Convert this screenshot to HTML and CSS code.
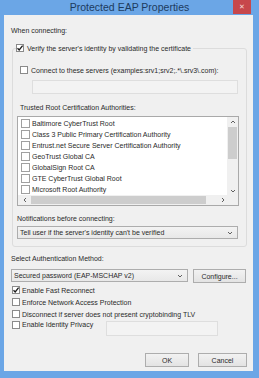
FILE: index.html
```html
<!DOCTYPE html>
<html lang="en">
<head>
  <meta charset="UTF-8">
  <title>Protected EAP Properties</title>
  <link rel="stylesheet" href="styles.css">
</head>
<body>
  <div class="window">
    <div class="titlebar">
      <span class="title">Protected EAP Properties</span>
      <span class="close">&#x2715;</span>
    </div>

    <div class="content">
      <div class="label top-label">When connecting:</div>

      <div class="group">
        <div class="check-row group-title">
          <span class="box checked"><svg viewBox="0 0 8 8"><path d="M1.5 4.2 L3.2 6 L6.6 1.6" /></svg></span>
          <span>Verify the server's identity by validating the certificate</span>
        </div>

        <div class="check-row connect-row">
          <span class="box"></span>
          <span>Connect to these servers (examples:srv1;srv2;.*\.srv3\.com):</span>
        </div>
        <div class="field server-field"></div>

        <div class="label trusted-label">Trusted Root Certification Authorities:</div>
        <div class="list">
          <div class="list-body">
            <div class="list-items">
              <div class="list-item"><span class="box"></span>Baltimore CyberTrust Root</div>
              <div class="list-item"><span class="box"></span>Class 3 Public Primary Certification Authority</div>
              <div class="list-item"><span class="box"></span>Entrust.net Secure Server Certification Authority</div>
              <div class="list-item"><span class="box"></span>GeoTrust Global CA</div>
              <div class="list-item"><span class="box"></span>GlobalSign Root CA</div>
              <div class="list-item"><span class="box"></span>GTE CyberTrust Global Root</div>
              <div class="list-item"><span class="box"></span>Microsoft Root Authority</div>
            </div>
            <div class="vscroll">
              <svg class="arrow" viewBox="0 0 6 4"><path d="M1 3 L3 1 L5 3" /></svg>
              <div class="vthumb"></div>
              <div class="vspace"></div>
              <svg class="arrow" viewBox="0 0 6 4"><path d="M1 1 L3 3 L5 1" /></svg>
            </div>
          </div>
          <div class="hscroll">
            <svg class="harrow" viewBox="0 0 4 6"><path d="M3 1 L1 3 L3 5" /></svg>
            <div class="hthumb"></div>
            <div class="hspace"></div>
            <svg class="harrow" viewBox="0 0 4 6"><path d="M1 1 L3 3 L1 5" /></svg>
            <div class="corner"></div>
          </div>
        </div>

        <div class="label notify-label">Notifications before connecting:</div>
        <div class="select notify-select">
          <span>Tell user if the server's identity can't be verified</span>
          <svg class="drop" viewBox="0 0 6 4"><path d="M1 1 L3 3 L5 1" /></svg>
        </div>
      </div>

      <div class="label auth-label">Select Authentication Method:</div>
      <div class="auth-row">
        <div class="select auth-select">
          <span>Secured password (EAP-MSCHAP v2)</span>
          <svg class="drop" viewBox="0 0 6 4"><path d="M1 1 L3 3 L5 1" /></svg>
        </div>
        <div class="button configure">Configure...</div>
      </div>

      <div class="options">
        <div class="check-row opt">
          <span class="box checked"><svg viewBox="0 0 8 8"><path d="M1.5 4.2 L3.2 6 L6.6 1.6" /></svg></span>
          <span>Enable Fast Reconnect</span>
        </div>
        <div class="check-row opt">
          <span class="box"></span>
          <span>Enforce Network Access Protection</span>
        </div>
        <div class="check-row opt">
          <span class="box"></span>
          <span>Disconnect if server does not present cryptobinding TLV</span>
        </div>
        <div class="check-row opt identity-row">
          <span class="box"></span>
          <span class="identity-text">Enable Identity Privacy</span>
          <div class="field identity-field"></div>
        </div>
      </div>

      <div class="buttons">
        <div class="button ok">OK</div>
        <div class="button cancel">Cancel</div>
      </div>
    </div>
  </div>
</body>
</html>
```

FILE: styles.css
```css
* {
  margin: 0;
  padding: 0;
  box-sizing: border-box;
}

body {
  background-color: #6ba6e6;
  font-family: 'Liberation Sans', Arial, sans-serif;
  font-size: 7px;
  color: #2a2a2a;
}

.window {
  width: 259px;
  height: 378px;
  background-color: #6ba6e6;
  display: flex;
  flex-direction: column;
}

.titlebar {
  height: 15px;
  position: relative;
  display: flex;
  align-items: center;
  justify-content: center;
}

.title {
  font-size: 10.5px;
  color: #1d3b5e;
  margin-top: -1px;
}

.close {
  position: absolute;
  top: 0;
  left: 233px;
  width: 18px;
  height: 14px;
  background-color: #c7474b;
  color: #f4d6d7;
  font-size: 7px;
  display: flex;
  align-items: center;
  justify-content: center;
}

.content {
  margin: 0 6px 7px 4px;
  height: 356px;
  background-color: #f0f0f0;
  padding-left: 7px;
  display: flex;
  flex-direction: column;
}

.label {
  height: 10px;
  line-height: 10px;
  white-space: nowrap;
}

.top-label {
  margin-top: 11px;
}

/* group box */
.group {
  margin-top: 12px;
  margin-left: 1px;
  margin-right: 6px;
  height: 199px;
  border: 1px solid #dcdcdc;
  border-radius: 3px;
  padding: 0 7px 0 4px;
  display: flex;
  flex-direction: column;
}

.check-row {
  display: flex;
  align-items: center;
  height: 10px;
  white-space: nowrap;
}

.box {
  width: 8px;
  height: 8px;
  border: 1px solid #8a8a8a;
  background-color: #fff;
  margin-right: 3px;
  flex-shrink: 0;
  display: flex;
}

.box svg {
  width: 8px;
  height: 8px;
  margin: -1px;
}

.box svg path {
  fill: none;
  stroke: #1b1b1b;
  stroke-width: 1.3;
}

.group-title {
  margin-top: -6px;
  margin-left: -1px;
  align-self: flex-start;
  background-color: #f0f0f0;
  padding-right: 2px;
}

.connect-row {
  margin-top: 12px;
  margin-left: 3px;
}

.field {
  border: 1px solid #dedede;
  background-color: #f3f3f3;
}

.server-field {
  margin-top: 5px;
  margin-left: 15px;
  width: 206px;
  height: 14px;
}

.trusted-label {
  margin-top: 9px;
  margin-left: 3px;
}

/* certificate list */
.list {
  margin-top: 3px;
  width: 222px;
  border: 1px solid #a9a9a9;
  background-color: #fff;
}

.list-body {
  display: flex;
}

.list-items {
  flex: 1;
  padding-top: 1px;
}

.list-item {
  height: 11px;
  display: flex;
  align-items: center;
  padding-left: 3px;
  white-space: nowrap;
}

.list-item .box {
  width: 9px;
  height: 9px;
  border-color: #a0a0a0;
  margin-right: 2px;
}

.vscroll {
  width: 11px;
  background-color: #f0f0f0;
  display: flex;
  flex-direction: column;
  align-items: center;
  padding-top: 1px;
}

.arrow {
  width: 6px;
  height: 4px;
  margin: 2px 0;
}

.arrow path,
.harrow path,
.drop path {
  fill: none;
  stroke: #606060;
  stroke-width: 1;
}

.vthumb {
  width: 9px;
  height: 32px;
  margin-top: 1px;
  background-color: #cdcdcd;
}

.vspace {
  flex: 1;
}

.hscroll {
  height: 10px;
  background-color: #f0f0f0;
  display: flex;
  align-items: center;
  padding-left: 3px;
}

.harrow {
  width: 4px;
  height: 6px;
  margin: 0 2px;
}

.hthumb {
  width: 175px;
  height: 8px;
  margin-left: 2px;
  background-color: #cdcdcd;
}

.hspace {
  flex: 1;
}

.corner {
  width: 11px;
  height: 10px;
  background-color: #f0f0f0;
}

.notify-label {
  margin-top: 8px;
}

.select {
  height: 13px;
  border: 1px solid #adadad;
  background: linear-gradient(#f3f3f3, #e8e8e8);
  display: flex;
  align-items: center;
  justify-content: space-between;
  padding: 0 4px 0 2px;
  white-space: nowrap;
}

.drop {
  width: 6px;
  height: 4px;
}

.notify-select {
  margin-top: 2px;
  width: 221px;
}

.auth-label {
  margin-top: 7px;
}

.auth-row {
  margin-top: 5px;
  display: flex;
  align-items: flex-start;
}

.auth-select {
  width: 177px;
}

.button {
  height: 14px;
  border: 1px solid #adadad;
  background: linear-gradient(#f2f2f2, #e3e3e3);
  display: flex;
  align-items: center;
  justify-content: center;
}

.configure {
  margin-left: 5px;
  width: 53px;
}

.options {
  margin-top: 1px;
  margin-left: 1px;
}

.opt {
  height: 12px;
}

.opt .box {
  margin-right: 2px;
}

.identity-row {
  align-items: flex-start;
  height: 16px;
  padding-top: 1px;
}

.identity-text {
  width: 84px;
}

.identity-field {
  width: 112px;
  height: 15px;
  margin-top: 0;
  background-color: #f3f3f3;
}

.buttons {
  margin-top: 17px;
  margin-right: 6px;
  display: flex;
  justify-content: flex-end;
  gap: 9px;
}

.ok {
  width: 44px;
}

.cancel {
  width: 49px;
}
```
